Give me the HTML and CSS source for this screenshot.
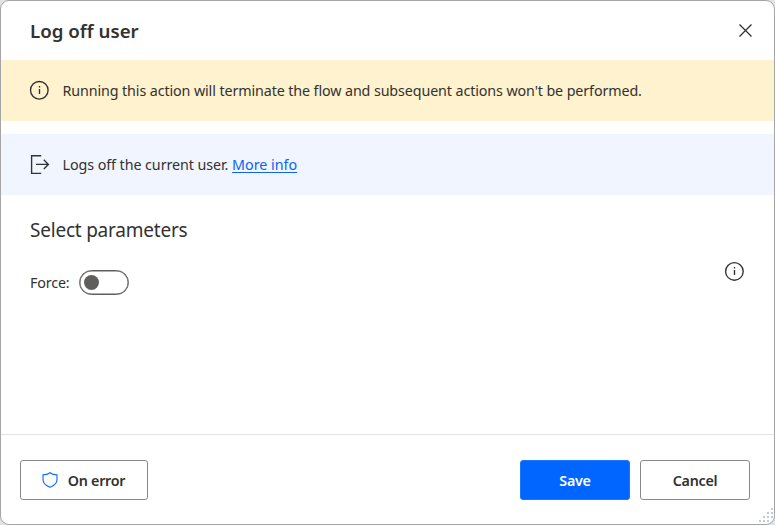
FILE: index.html
```html
<!DOCTYPE html>
<html lang="en">
<head>
<meta charset="utf-8">
<title>Log off user</title>
<link rel="stylesheet" href="styles.css">
</head>
<body>
<main class="dialog">
  <header class="header">
    <h1 class="title"><span>Log off user</span></h1>
    <button class="close" aria-label="Close"><svg width="14" height="14" viewBox="0 0 14 14"><path d="M1.5 .5L13.5 12.5M13.5 .5L1.5 12.5"/></svg></button>
  </header>
  <section class="banner warning">
    <svg class="icon" width="20" height="20" viewBox="0 0 20 20"><circle cx="10.3" cy="9.3" r="8.8"/><path d="M10.5 8V13M10.5 5V6.5"/></svg>
    <p><span class="warning-text">Running this action will terminate the flow and subsequent actions won't be performed.</span></p>
  </section>
  <section class="banner description">
    <svg class="icon" width="20" height="20" viewBox="0 0 20 20"><path d="M12.2 .7H2.6V18.3H12.2M7 9.4H19.3M14.8 4.8L19.4 9.4L14.8 14"/></svg>
    <p><span class="description-text">Logs off the current user.</span> <a class="link" href="#">More info</a></p>
  </section>
  <section class="parameters">
    <h2 class="subtitle"><span>Select parameters</span></h2>
    <div class="parameter">
      <span class="label">Force:</span>
      <button class="toggle" role="switch" aria-checked="false" aria-label="Force"><span class="knob"></span></button>
      <svg class="icon info" width="20" height="20" viewBox="0 0 20 20"><circle cx="9.4" cy="9.4" r="8.8"/><path d="M9.5 8V13M9.5 5V6.5"/></svg>
    </div>
  </section>
  <footer class="footer">
    <button class="button on-error"><svg width="16" height="16" viewBox="0 0 16 16"><path d="M7 .8C5.2 2.2 2.8 2.9 0 2.9V7.5C0 11.2 2.6 13.6 7 15.3C11.4 13.6 14 11.2 14 7.5V2.9C11.2 2.9 8.8 2.2 7 .8Z"/></svg><span>On error</span></button>
    <button class="button primary"><span>Save</span></button>
    <button class="button"><span>Cancel</span></button>
  </footer>
  <svg class="grip" width="14" height="14" viewBox="0 0 14 14"><path d="M12 0h2v2h-2zM8 4h2v2h-2zM12 4h2v2h-2zM4 8h2v2H4zM8 8h2v2H8zM12 8h2v2h-2zM0 12h2v2H0zM4 12h2v2H4zM8 12h2v2H8z"/></svg>
</main>
</body>
</html>
```
FILE: styles.css
```css
* { box-sizing: border-box; }
body { margin: 0; background: #e3e3e3; font-family: "Noto Sans", sans-serif; font-size: 14.3px; color: #323130; }
h1, h2, p { margin: 0; }
button { font: inherit; color: inherit; background: #fff; padding: 0; }
svg { flex: none; fill: none; stroke: #323130; overflow: visible; }
.dialog { position: relative; display: flex; flex-direction: column; width: 775px; height: 525px; background: #fff; border: 1px solid #a5a5a5; border-radius: 9px; overflow: hidden; white-space: nowrap; }
.header { height: 59px; display: flex; align-items: center; justify-content: space-between; padding: 0 22px 0 29px; }
.title { font-size: 18.7px; font-weight: 600; line-height: 26px; letter-spacing: 0; padding-top: 1px; }
.close { display: flex; border: 0; }
.close svg { stroke-width: 1.3; }
.banner { height: 61px; display: flex; align-items: center; gap: 13.5px; padding-left: 28px; }
.icon { stroke-width: 1.35; }
.warning { background: #fff2cf; }
.warning-text { letter-spacing: -.11px; }
.description { margin-top: 13px; background: #f1f5ff; }
.description-text { letter-spacing: -.07px; }
.link { color: #0c63f5; letter-spacing: 0; text-underline-offset: 2px; }
.parameters { flex: 1; padding: 22px 29px 0; }
.subtitle { font-size: 19px; font-weight: 400; line-height: 26px; letter-spacing: -.22px; }
.parameter { display: flex; align-items: center; height: 25px; margin-top: 27px; }
.label { width: 49px; letter-spacing: -.15px; }
.toggle { width: 50px; height: 25px; border: 1px solid #605e5c; box-shadow: inset 0 0 0 .5px #605e5c; border-radius: 13px; padding-left: 4px; display: flex; align-items: center; }
.knob { width: 15px; height: 15px; border-radius: 50%; background: #605e5c; }
.info { margin: -22px 0 0 auto; }
.footer { height: 90px; border-top: 1px solid #e3e3e3; display: flex; align-items: center; gap: 10px; padding: 0 24px 0 19px; }
.button { width: 110px; height: 40px; border: 1px solid #8a8886; border-radius: 3px; font-weight: 600; letter-spacing: -.25px; display: flex; align-items: center; justify-content: center; }
.button span { padding-top: 1px; }
.on-error { width: 128px; gap: 9px; margin-right: auto; }
.on-error svg { stroke: #0f6cff; stroke-width: 1.15; }
.primary { background: #0066ff; border-color: #1a75ff; color: #fff; }
.grip { position: absolute; right: 1px; bottom: 2px; fill: #c0c9e2; stroke: none; }
```
